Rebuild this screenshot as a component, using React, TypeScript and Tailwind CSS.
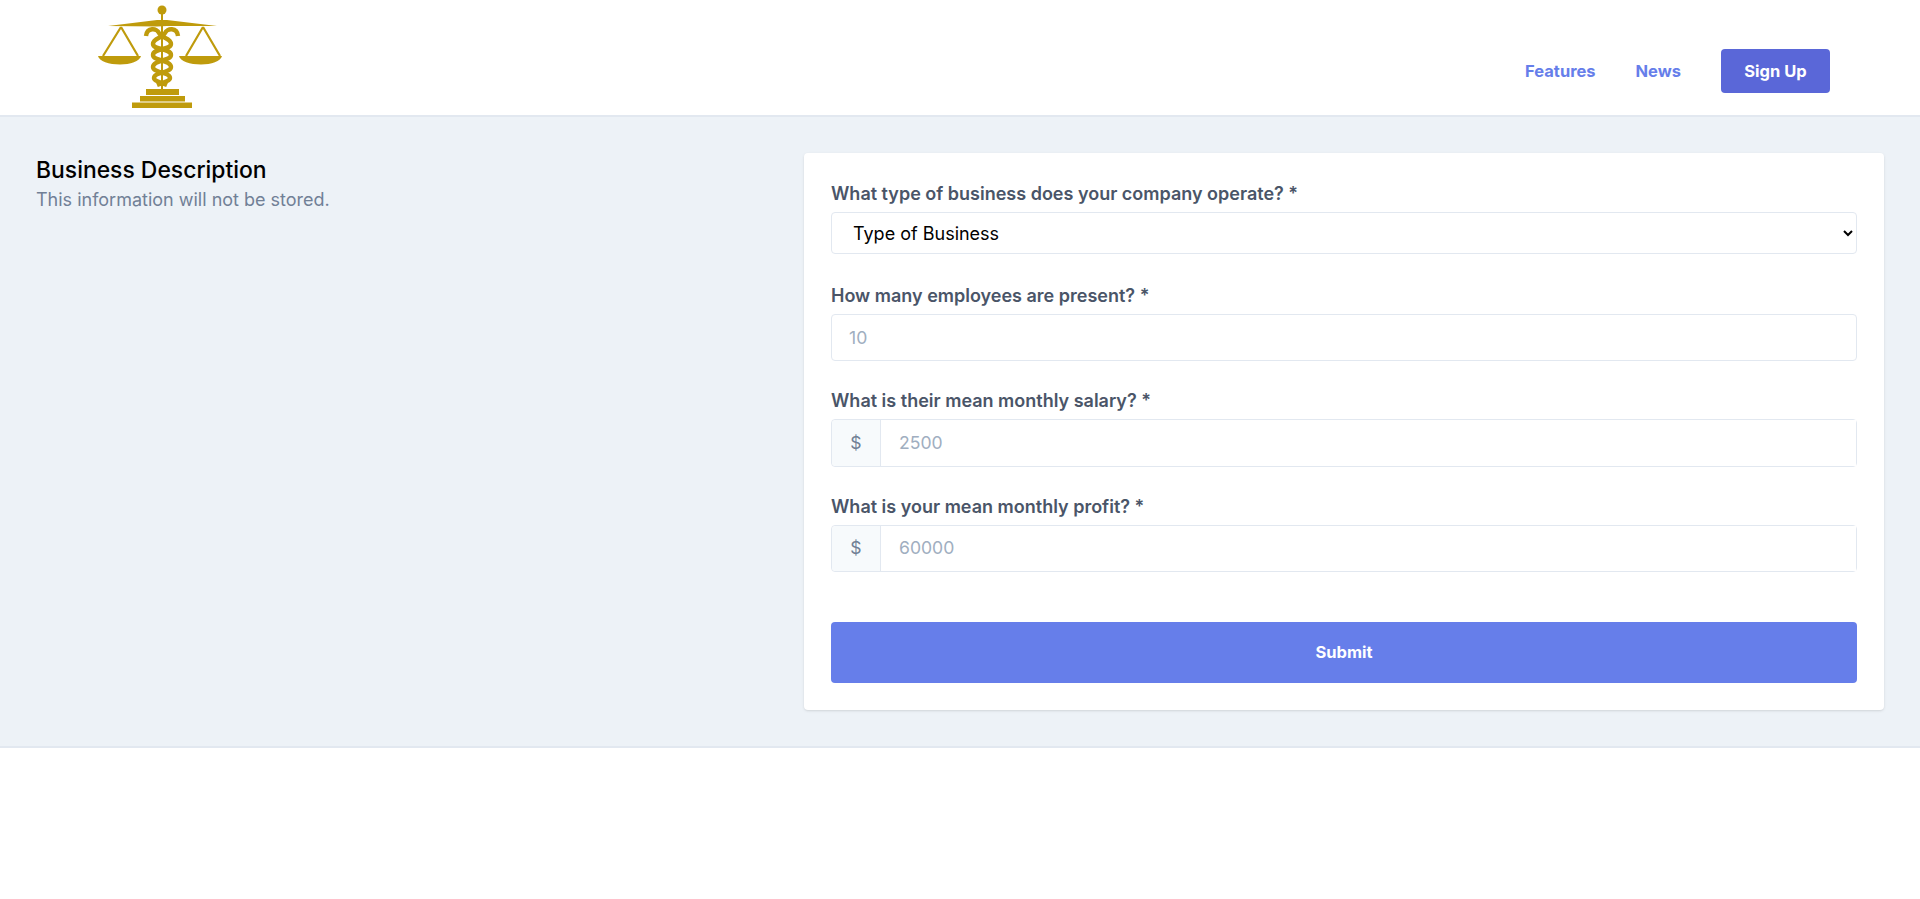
const Logo = () => (
  <svg width="160" height="115" viewBox="0 0 160 115" className="ml-[80px] shrink-0" fill="none">
    <g stroke="#bf9b0c" fill="none">
      {/* staff */}
      <path d="M82 10V92" strokeWidth="2" />
      {/* scale strings */}
      <path d="M41 27L23 56M41 27L58 56M123 27L106 56M123 27L140 56" strokeWidth="2.2" />
      {/* snakes */}
      <path d="M66 36C67 27 77 28 79 33C81 38 91 38 91 44C91 50 73 48 73 55C73 61 91 60 91 67C91 73 74 72 74 78C74 81 82 83 87 85" strokeWidth="4.4" />
      <path d="M98 36C97 27 87 28 85 33C83 38 73 38 73 44C73 50 91 48 91 55C91 61 73 60 73 67C73 73 90 72 90 78C90 81 82 83 77 85" strokeWidth="4.4" />
    </g>
    <g fill="#bf9b0c">
      <circle cx="82" cy="10" r="4.5" />
      <path d="M28 26L77 20H87L137 26H87L77 26.5Z" />
      <path d="M18 56H61C60 61 50 64.5 40 64.5C29 64.5 19 61 18 56Z" />
      <path d="M99 56H142C141 61 131 64.5 121 64.5C110 64.5 100 61 99 56Z" />
      <rect x="66" y="89" width="33" height="6" />
      <rect x="60" y="96" width="45" height="5.5" />
      <rect x="52" y="102.5" width="60" height="5.5" />
    </g>
  </svg>
);

const Header = () => (
  <header className="flex h-[117px] items-center justify-between border-b-2 border-[#e2e8f0] bg-white">
    <Logo />
    <nav className="flex items-center pr-[90px] pt-[27px]">
      <a href="#" className="text-[16.5px] font-bold text-[#667eea]">Features</a>
      <a href="#" className="ml-10 text-[16.5px] font-bold text-[#667eea]">News</a>
      <a href="#" className="ml-10 flex h-11 w-[109px] items-center justify-center rounded bg-[#5a67d8] text-[16.5px] font-bold text-white">Sign Up</a>
    </nav>
  </header>
);

const Field = ({ label, children }: { label: string; children: React.ReactNode }) => (
  <div className="flex flex-col">
    <label className="mb-[5px] text-[18px] leading-[27px] font-semibold text-[#4a5568]">{label}</label>
    {children}
  </div>
);

const MoneyInput = ({ placeholder }: { placeholder: string }) => (
  <div className="flex h-[47.5px] rounded border border-[#e2e8f0]">
    <span className="flex w-[49px] items-center justify-center rounded-l border-r border-[#e2e8f0] bg-[#f7fafc] text-[17.6px] text-[#718096]">$</span>
    <input placeholder={placeholder} className="min-w-0 flex-1 bg-white px-[18px] text-[17.6px] outline-none placeholder:text-[#a0aec0]" />
  </div>
);

export default function App() {
  return (
    <div className="min-h-[899px] bg-white font-['Inter',sans-serif]">
      <Header />
      <main className="flex h-[631px] items-start justify-between border-b-2 border-[#e2e8f0] bg-[#edf2f7] px-9 pt-9">
        <div className="pt-[2px]">
          <h2 className="text-[22.9px] leading-[30px] font-medium text-black">Business Description</h2>
          <p className="text-[18px] leading-[30px] text-[#718096]">This information will not be stored.</p>
        </div>
        <form className="flex h-[557px] w-[1080px] flex-col rounded bg-white px-[27px] pt-[27px] shadow">
          <div className="flex flex-col gap-[26px]">
            <Field label="What type of business does your company operate? *">
              <select className="mb-[2px] h-[42px] w-full rounded border border-[#e2e8f0] bg-white pl-[17px] pr-[14px] text-[18px] text-black outline-none">
                <option>Type of Business</option>
              </select>
            </Field>
            <Field label="How many employees are present? *">
              <input placeholder="10" className="h-[47px] rounded border border-[#e2e8f0] bg-white px-[17px] text-[17.6px] outline-none placeholder:text-[#a0aec0]" />
            </Field>
            <Field label="What is their mean monthly salary? *">
              <MoneyInput placeholder="2500" />
            </Field>
            <Field label="What is your mean monthly profit? *">
              <MoneyInput placeholder="60000" />
            </Field>
          </div>
          <button type="button" className="mt-[50px] h-[61px] w-full shrink-0 rounded bg-[#667eea] text-[16.5px] font-bold text-white">Submit</button>
        </form>
      </main>
    </div>
  );
}
